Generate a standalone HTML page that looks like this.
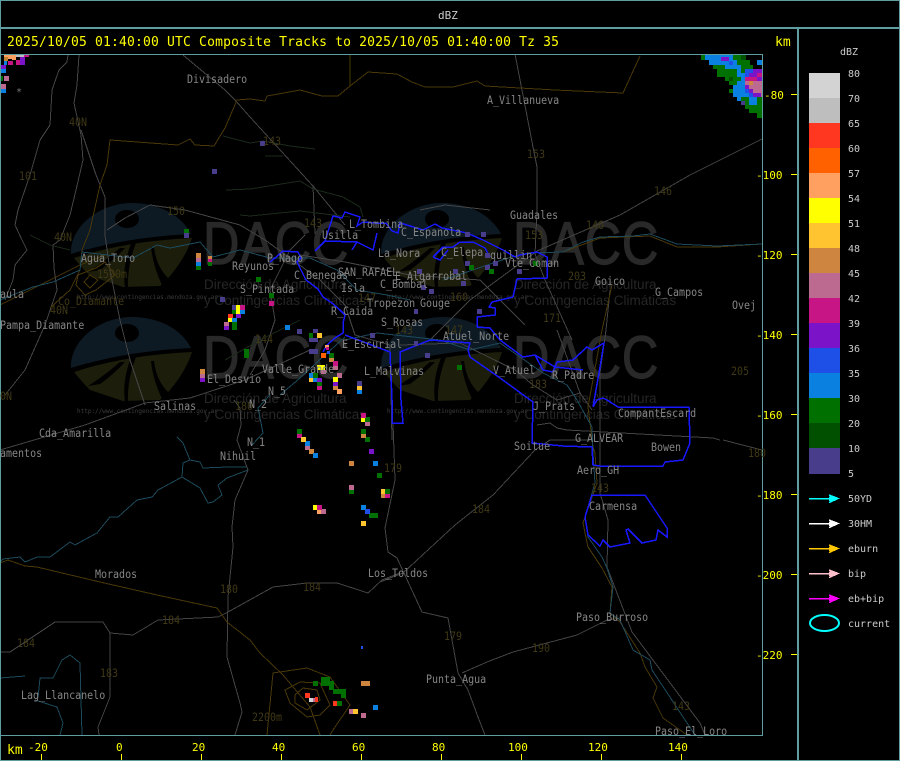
<!DOCTYPE html>
<html><head><meta charset="utf-8"><style>
html,body{margin:0;padding:0;background:#000;width:900px;height:761px;overflow:hidden}
svg{display:block}
text{font-family:"DejaVu Sans Mono","Liberation Mono",monospace;font-size:10px;white-space:pre}
.l{fill:#858585}.n{fill:#3f3815}.y{fill:#ff0;font-size:11px}.t{fill:#ff0;font-size:13px}.g{fill:#ccc}
.d{font-family:"Liberation Sans",sans-serif;font-size:13.5px;fill:#262626}
.u{font-size:6px;fill:#3c3c3c}
.r{fill:none;stroke:#444;stroke-width:1}
.b{fill:none;stroke:#4a3708;stroke-width:1}
.w{fill:none;stroke:#1c4a5c;stroke-width:1}
.e{fill:none;stroke:#1a2a1a;stroke-width:1}
.p{fill:none;stroke:#1818ff;stroke-width:1.5}
</style></head><body>
<svg width="900" height="761" viewBox="0 0 900 761" xmlns="http://www.w3.org/2000/svg">
<defs>
<g id="logo">
<path d="M71 368C70 340 100 317 132 317C160 317 182 330 191 348C150 350 110 356 71 368Z" fill="#0d1a24"/>
<ellipse cx="127" cy="333" rx="12" ry="9" fill="#000"/>
<path d="M74 372C110 360 150 354 192 352C188 365 180 378 170 390L160 400L123 401L90 390Q82 382 74 372Z" fill="#1c1d0b"/>
<path fill="#000" d="M120 362Q104 376 88 386L100 384Q114 374 125 362ZM131 358Q122 380 125 402L128 402Q127 380 136 357ZM151 361Q153 380 162 399L168 392Q156 380 154 361Z"/>
<text transform="matrix(.84 0 0 1 203 378)" style="font-family:'Liberation Sans',sans-serif;font-size:60px;fill:#292929;stroke:#292929;stroke-width:1.2;letter-spacing:1px">DACC</text>
<text class="d" x="204" y="403">Dirección de Agricultura</text>
<text class="d" x="204" y="419">y Contingencias Climáticas</text>
<text class="u" x="77" y="413">http://www.contingencias.mendoza.gov.ar</text>
</g>
<g id="ah"><path d="M0 .5H29M20-3l9 3.5l-9 4M20-1h6M20 2h6" fill="none" stroke-width="1.5" shape-rendering="crispEdges"/></g>
</defs>
<rect width="900" height="761" fill="#000"/>

<use href="#logo" y="-114"/><use href="#logo"/><use href="#logo" x="310" y="-114"/><use href="#logo" x="310"/>

<g shape-rendering="crispEdges">
<!-- roads -->
<path class="r" d="M68 55L67 62L59 70L52 90L51 108L50 125L40 140L30 175L18 210L15 225L22 240L27 250L15 265L13 280L5 300"/>
<path class="r" d="M79 55L77 85L74 103L81 135L83 160L76 190L70 215L60 240L53 245L54 268L57 290L45 325L25 370L5 395"/>
<path class="r" d="M81 130L96 175L105 197L105 235L110 270L120 320L130 360L145 405"/>
<path class="r" d="M183 55L225 90L235 100L250 117L313 186L315 234M313 186L345 225"/>
<path class="r" d="M107 230L125 218L150 205L185 210L240 225L265 240L290 258L320 280L345 305L355 335L390 345L392 440"/>
<path class="r" d="M0 450L85 425L145 403L190 398L245 380L310 350"/>
<path class="r" d="M234 400L240 408L241 425L237 440L248 470L235 500L232 527L233 547L228 597L227 657L240 703L242 712L235 735"/>
<path class="r" d="M305 235L290 250L270 290L275 320L265 350L250 375"/>
<path class="r" d="M525 325L480 280L410 275L345 262L300 255M420 210L445 205L490 210"/>
<path class="r" d="M400 345L460 343L515 370L533 385L557 400L580 393L592 410M557 330L580 393"/>
<path class="r" d="M610 290L606 330L600 373L600 493L608 520L607 567L632 632L700 723L705 735"/>
<path class="r" d="M762 139L690 175L620 215L537 251L470 300L430 340"/>
<path class="r" d="M515 54L533 147L537 167L537 211L535 254L545 280L572 340"/>
<path class="r" d="M537 425L550 423L557 428L567 430L713 438L720 440M723 440L762 450"/>
<path class="r" d="M380 582L403 573L455 525L493 495L535 450L550 440L590 440"/>
<path class="r" d="M393 423L395 480L385 528L388 552L397 558L422 612L448 618L458 673L468 690L478 717L485 735"/>
<path class="r" d="M462 673L487 662L513 652L577 635L607 620L620 618"/>
<path class="r" d="M0 652L10 652L55 622L103 622L110 633L133 635L158 620L218 617L228 612L273 587L307 583L337 583L368 593L382 580L400 573"/>
<path class="r" d="M110 633L110 697L98 727L99 735"/>
<!-- brown -->
<path class="b" d="M350 54L350 86L368 72L397 74L412 82L425 87L453 87L477 81L485 86L520 88L555 90L623 93L640 56"/>
<path class="b" d="M350 86L338 96L322 96L300 90L267 96L265 101L250 99L237 100L225 128L214 146L195 145L190 139L178 145L110 140L107 165L100 185L90 230L82 250L80 270L70 290L50 308"/>
<path class="b" d="M0 305L40 285L80 265L105 255"/>
<path class="b" d="M96 268L78 275L76 285L85 295L96 290L115 275L105 262Z M90 275L84 282L90 288L98 280Z"/>
<path class="b" d="M612 285L602 330L588 407L593 447L595 453L597 483L583 523L588 547L602 568L612 587L610 613L620 622L640 653L645 667L657 687L653 698L663 718L687 735"/>
<path class="b" d="M0 563L8 560L25 566L37 567L100 582L157 595L217 608L227 622L250 640L260 653L283 675L310 707L320 735"/>
<path class="b" d="M267 735L273 673L307 668L330 677L350 705L333 730L330 735"/>
<path class="b" d="M285 690L300 682L320 683L330 705L320 715L307 717L290 703Z M295 695L303 688L317 690L320 700L307 710L295 703Z"/>
<path class="b" d="M563 252L600 238L650 236L677 247L717 247L762 244"/>
<!-- rivers -->
<path class="w" d="M0 300L33 287L53 282L80 270L82 252L133 258L157 245L170 248L200 242L213 257L240 250L270 258L310 258L337 270L357 290L387 295L410 300"/>
<path class="w" d="M345 340L377 333L440 340L470 350L500 343L520 357L543 373L567 385L577 400L592 427L593 453L595 483L585 517L588 537L602 557L607 568L613 587L610 613L620 620L633 650L650 660L652 670L695 735"/>
<path class="w" d="M280 395L300 378L325 355L345 337"/>
<path class="w" d="M443 280L467 272L493 263L508 258L528 253L563 252L583 242L600 237L633 236L650 234L677 244L717 246L762 244"/>
<path class="w" d="M270 395L258 408L263 433L252 445M0 562L3 559L20 557L25 562L37 557L50 557L70 542L75 545L97 533L110 517L118 517L137 500L152 497L158 490L182 477L200 488L208 503L213 502L222 495L218 485L227 478L248 470M182 477L183 463L190 460L183 443L177 437M190 460L200 462L203 468L227 467L247 467"/>
<path class="w" d="M0 678L25 676M38 698L40 678L53 678L62 660L70 655L80 663L82 735M35 700L57 707L63 723L60 735"/>
<!-- green -->
<path class="e" d="M223 136L250 143L263 141L290 146L315 149M265 156L283 156M226 190L250 189L300 181L313 189L343 197L360 207L363 217M240 215L250 216L300 211L350 217M30 235L50 245L70 250M225 360L260 340L300 320"/>
<!-- blue -->
<path class="p" d="M270 262L275 258L283 251L298 252L301 258L297 262L302 272L306 280L318 289L323 297L332 303L340 310L345 315L343 323L343 333L335 338L327 345L323 352"/>
<path class="p" d="M315 251L325 241L333 216L342 218L345 212L360 217L357 226L363 222L375 223L386 223L392 231L398 233L400 223L407 225L423 230L435 224L442 228L467 233L483 240L503 250L515 257L520 255L537 252L547 257L547 278L517 279L513 297L492 302L489 307L495 308L495 315L477 317L477 327L490 328L500 340L523 357L535 355L555 367L583 370"/>
<path class="p" d="M357 242L373 250L377 233M325 241L357 242L352 250"/>
<path class="p" d="M433 257L443 247L453 247L460 242L473 242L485 248L490 257M433 257L440 260L448 250"/>
<path class="p" d="M345 335L390 352L392 400L392 423L403 423L401 400L400 352L430 340L470 343L468 350L470 357L500 378L533 402L532 443L563 446L592 447L593 465L600 466L663 466L665 462L683 460L690 443L689 407L618 407L607 400L603 398L597 400L593 407L599 373L604 343L592 350L587 347L573 360L557 362L553 372L543 370L535 355"/>
<path class="p" d="M592 495L645 495L667 528L667 537L658 530L656 540L642 543L628 529L626 530L630 543L610 547L603 540L600 546L588 535L585 517Z"/>

<!-- radar: top-left -->
<path fill="#ffa060" d="M4 55h12v4H4zM12 55h4v5h-4z"/>
<path fill="#c08030" d="M4 57h4v4H4z"/>
<path fill="#bebebe" d="M16 55h8v2h-8z"/>
<path fill="#c71585" d="M24 55h5v2h-5zM8 61h5v4H8zM16 60h4v5h-4z"/>
<path fill="#7b14c8" d="M20 57h5v8h-5zM1 65h5v4H1z"/>
<path fill="#0a80e0" d="M4 61h3v4H4zM1 69h5v4H1zM1 89h5v4H1z"/>
<path fill="#bc6a8f" d="M4 76h5v5H4zM1 84h5v5H1z"/>
<path fill="#007000" d="M1 76h2v5H1z"/>
<!-- radar: top-right -->
<path fill="#007000" d="M701 55h4v5h-4zM733 55h13v5h-13zM737 60h13v5h-13zM713 65h12v4h-12zM741 65h12v4h-12zM717 69h20v8h-20zM741 69h4v4h-4zM725 77h16v4h-16zM729 81h8v4h-8zM729 89h4v4h-4zM741 97h8v4h-8zM757 97h5v8h-5zM745 101h4v4h-4zM745 105h17v4h-17zM749 109h13v4h-13zM757 113h5v5h-5z"/>
<path fill="#005000" d="M741 55h5v5h-5zM729 77h4v4h-4z"/>
<path fill="#0a80e0" d="M705 55h28v5h-28zM709 60h28v5h-28zM725 65h16v4h-16zM757 60h5v5h-5zM737 69h4v8h-4zM741 73h4v4h-4zM741 77h4v8h-4zM737 81h8v4h-8zM733 85h12v12h-12zM745 93h4v4h-4zM737 97h4v4h-4zM749 97h8v8h-8z"/>
<path fill="#7b14c8" d="M721 57h8v4h-8zM753 69h9v4h-9zM749 73h8v4h-8zM757 77h5v4h-5zM745 85h4v4h-4zM749 89h4v4h-4zM753 93h8v4h-8z"/>
<path fill="#1e50e8" d="M729 61h4v4h-4zM745 69h4v4h-4zM749 69h4v4h-4zM745 73h4v4h-4zM745 89h4v4h-4zM749 93h4v4h-4z"/>
<path fill="#c71585" d="M745 77h12v4h-12zM757 73h5v4h-5z"/>
<path fill="#bc6a8f" d="M745 81h17v4h-17zM749 85h13v4h-13zM753 89h9v4h-9zM761 93h1v4h-1z"/>
<path fill="#cd853f" d="M749 81h4v4h-4z"/>
<path fill="#483d8b" d="M741 101h4v4h-4z"/>
<!-- radar: scatter -->
<path fill="#483d8b" d="M184 233h5v5h-5zM260 141h5v5h-5zM212 169h5v5h-5zM220 297h5v5h-5zM232 305h4v5h-4zM297 329h5v5h-5zM313 329h5v4h-5zM309 338h9v4h-9zM309 349h9v5h-9zM357 381h5v5h-5zM370 333h5v5h-5zM414 309h4v5h-4zM414 341h4v5h-4zM465 232h5v5h-5zM481 232h5v5h-5zM485 253h5v5h-5zM465 261h5v5h-5zM493 261h5v5h-5zM485 265h5v5h-5zM517 269h5v5h-5zM417 269h5v5h-5zM453 269h5v5h-5zM461 281h5v5h-5zM421 285h5v5h-5zM429 289h5v5h-5zM477 309h5v5h-5zM425 353h5v5h-5z"/>
<path fill="#007000" d="M184 229h5v4h-5zM196 266h5v4h-5zM208 262h4v4h-4zM256 277h5v5h-5zM269 293h5v5h-5zM232 310h4v4h-4zM232 322h5v8h-5zM309 333h4v5h-4zM244 349h5v9h-5zM329 353h5v5h-5zM313 373h5v5h-5zM317 382h5v4h-5zM469 265h5v5h-5zM489 269h5v5h-5zM533 261h5v5h-5zM457 365h5v5h-5zM365 417h5v5h-5zM361 429h5v5h-5zM365 437h5v5h-5zM377 473h5v5h-5zM349 490h5v4h-5zM385 489h5v5h-5zM297 429h5v5h-5zM369 513h9v5h-9zM313 681h5v5h-5zM321 677h9v9h-9zM329 681h5v9h-5zM333 689h13v5h-13zM341 694h5v4h-5zM337 701h5v5h-5z"/>
<path fill="#bc6a8f" d="M196 258h5v4h-5zM224 322h5v4h-5zM333 366h5v4h-5zM321 370h5v4h-5zM337 373h5v5h-5zM200 374h5v4h-5zM365 422h5v4h-5zM349 485h5v5h-5zM305 446h5v4h-5zM321 509h5v5h-5zM349 709h4v5h-4zM361 713h5v5h-5zM313 698h5v4h-5z"/>
<path fill="#cd853f" d="M196 253h5v5h-5zM208 256h4v3h-4zM329 358h5v4h-5zM200 369h5v5h-5zM333 386h5v4h-5zM361 434h5v4h-5zM349 461h5v5h-5zM381 494h4v4h-4zM309 449h5v5h-5zM361 681h9v5h-9z"/>
<path fill="#c71585" d="M208 259h4v3h-4zM269 301h5v5h-5zM240 305h5v5h-5zM333 361h5v5h-5zM317 386h5v4h-5zM361 413h5v5h-5zM385 494h5v4h-5zM297 434h5v4h-5zM317 505h5v5h-5z"/>
<path fill="#0a80e0" d="M196 262h5v4h-5zM240 310h5v4h-5zM232 318h5v4h-5zM285 325h5v5h-5zM309 373h4v5h-4zM313 378h5v4h-5zM357 390h5v4h-5zM373 461h5v5h-5zM305 441h5v5h-5zM313 453h5v5h-5zM361 505h5v5h-5zM373 705h5v5h-5z"/>
<path fill="#ff0" d="M236 305h4v9h-4zM228 318h4v4h-4zM317 365h8v5h-8zM333 377h5v5h-5zM361 418h4v4h-4zM313 505h4v5h-4z"/>
<path fill="#7b14c8" d="M236 314h5v4h-5zM224 326h5v4h-5zM200 378h5v4h-5zM317 378h5v4h-5zM333 382h5v4h-5zM369 449h5v5h-5z"/>
<path fill="#ff3620" d="M228 314h5v4h-5zM305 693h5v5h-5zM315 697h3v5h-3zM333 701h4v5h-4z"/>
<path fill="#ffc430" d="M317 333h5v5h-5zM309 378h4v4h-4zM357 386h5v4h-5zM381 489h4v5h-4zM301 437h5v5h-5zM361 521h5v5h-5zM353 709h5v5h-5z"/>
<path fill="#ff6000" d="M321 353h5v5h-5z"/>
<path fill="#ffa060" d="M337 389h5v5h-5zM317 510h4v4h-4zM325 345h4v3h-4z"/>
<path fill="#1e50e8" d="M365 509h5v5h-5zM327 351h3v3h-3zM361 646h2v3h-2z"/>
<path fill="#c71585" d="M326 347h3v3h-3z"/>
<path fill="#d3d3d3" d="M309 698h4v4h-4z"/>

<!-- frame -->
<path fill="#5f9ea0" d="M0 0h900v1H0zM0 27h900v2H0zM0 54h763v1H0zM0 760h900v1H0zM0 0h1v761H0zM797 28h2v733h-2zM899 0h1v761h-1zM0 735h763v1H0zM762 54h1v682h-1z"/>
<!-- ticks -->
<path fill="#ff0" d="M791 94h6v1h-6zM791 174h6v1h-6zM791 254h6v1h-6zM791 334h6v1h-6zM791 414h6v1h-6zM791 494h6v1h-6zM791 574h6v1h-6zM791 654h6v1h-6zM41 754h1v6h-1zM121 754h1v6h-1zM201 754h1v6h-1zM281 754h1v6h-1zM361 754h1v6h-1zM441 754h1v6h-1zM521 754h1v6h-1zM601 754h1v6h-1zM681 754h1v6h-1z"/>
<!-- legend -->
<rect x="809" y="73" width="31" height="25" fill="#d3d3d3"/><rect x="809" y="98" width="31" height="25" fill="#bebebe"/><rect x="809" y="123" width="31" height="25" fill="#ff3620"/><rect x="809" y="148" width="31" height="25" fill="#ff6000"/><rect x="809" y="173" width="31" height="25" fill="#ffa060"/><rect x="809" y="198" width="31" height="25" fill="#ff0"/><rect x="809" y="223" width="31" height="25" fill="#ffc430"/><rect x="809" y="248" width="31" height="25" fill="#cd853f"/><rect x="809" y="273" width="31" height="25" fill="#bc6a8f"/><rect x="809" y="298" width="31" height="25" fill="#c71585"/><rect x="809" y="323" width="31" height="25" fill="#7b14c8"/><rect x="809" y="348" width="31" height="25" fill="#1e50e8"/><rect x="809" y="373" width="31" height="25" fill="#0a80e0"/><rect x="809" y="398" width="31" height="25" fill="#007000"/><rect x="809" y="423" width="31" height="25" fill="#005000"/><rect x="809" y="448" width="31" height="26" fill="#483d8b"/>
</g>
<use href="#ah" x="809" y="498" stroke="#0ff"/><use href="#ah" x="809" y="523" stroke="#fff"/><use href="#ah" x="809" y="548" stroke="#ffc800"/><use href="#ah" x="809" y="573" stroke="#ffc0cb"/><use href="#ah" x="809" y="598" stroke="#f0f"/>
<ellipse cx="824.5" cy="623" rx="14.5" ry="8" fill="none" stroke="#0ff" stroke-width="2"/>

<!-- legend text -->
<g class="g">
<text x="438" y="19" style="font-size:11px">dBZ</text>
<text x="840" y="55">dBZ</text>
<text x="848" y="77">80</text><text x="848" y="102">70</text><text x="848" y="127">65</text><text x="848" y="152">60</text><text x="848" y="177">57</text><text x="848" y="202">54</text><text x="848" y="227">51</text><text x="848" y="252">48</text><text x="848" y="277">45</text><text x="848" y="302">42</text><text x="848" y="327">39</text><text x="848" y="352">36</text><text x="848" y="377">35</text><text x="848" y="402">30</text><text x="848" y="427">20</text><text x="848" y="452">10</text><text x="848" y="477">5</text>
<text x="848" y="502">50YD</text><text x="848" y="527">30HM</text><text x="848" y="552">eburn</text><text x="848" y="577">bip</text><text x="848" y="602">eb+bip</text><text x="848" y="627">current</text>
</g>

<!-- title & axes -->
<text class="t" x="7" y="46" textLength="552">2025/10/05 01:40:00 UTC Composite Tracks to 2025/10/05 01:40:00 Tz 35</text>
<text class="t" x="775" y="46">km</text>
<text class="t" x="7" y="754">km</text>
<text class="y" x="764" y="99">-80</text><text class="y" x="756" y="179">-100</text><text class="y" x="756" y="259">-120</text><text class="y" x="756" y="339">-140</text><text class="y" x="756" y="419">-160</text><text class="y" x="756" y="499">-180</text><text class="y" x="756" y="579">-200</text><text class="y" x="756" y="659">-220</text>
<text class="y" x="28" y="751">-20</text><text class="y" x="116" y="751">0</text><text class="y" x="192" y="751">20</text><text class="y" x="272" y="751">40</text><text class="y" x="352" y="751">60</text><text class="y" x="432" y="751">80</text><text class="y" x="508" y="751">100</text><text class="y" x="588" y="751">120</text><text class="y" x="668" y="751">140</text>

<!-- brown labels -->
<g class="n">
<text transform="matrix(1 0 0 1.15 69 126)">40N</text><text transform="matrix(1 0 0 1.15 19 180)">101</text><text transform="matrix(1 0 0 1.15 263 145)">143</text><text transform="matrix(1 0 0 1.15 527 158)">153</text><text transform="matrix(1 0 0 1.15 654 195)">146</text><text transform="matrix(1 0 0 1.15 167 215)">150</text><text transform="matrix(1 0 0 1.15 586 229)">146</text><text transform="matrix(1 0 0 1.15 525 239)">153</text><text transform="matrix(1 0 0 1.15 304 227)">143</text><text transform="matrix(1 0 0 1.15 54 241)">40N</text><text transform="matrix(1 0 0 1.15 97 278)">1500m</text><text transform="matrix(1 0 0 1.15 568 280)">203</text><text transform="matrix(1 0 0 1.15 50 314)">40N</text><text transform="matrix(1 0 0 1.15 358 302)">147</text><text transform="matrix(1 0 0 1.15 450 301)">160</text><text transform="matrix(1 0 0 1.15 543 322)">171</text><text transform="matrix(1 0 0 1.15 255 343)">144</text><text transform="matrix(1 0 0 1.15 395 334)">143</text><text transform="matrix(1 0 0 1.15 445 334)">147</text><text transform="matrix(1 0 0 1.15 731 375)">205</text><text transform="matrix(1 0 0 1.15 529 388)">183</text><text transform="matrix(1 0 0 1.15 235 410)">180</text><text transform="matrix(1 0 0 1.15 0 400)">0N</text><text transform="matrix(1 0 0 1.15 748 457)">180</text><text transform="matrix(1 0 0 1.15 384 472)">179</text><text transform="matrix(1 0 0 1.15 591 492)">143</text><text transform="matrix(1 0 0 1.15 472 513)">184</text><text transform="matrix(1 0 0 1.15 303 591)">184</text><text transform="matrix(1 0 0 1.15 220 593)">180</text><text transform="matrix(1 0 0 1.15 162 624)">184</text><text transform="matrix(1 0 0 1.15 444 640)">179</text><text transform="matrix(1 0 0 1.15 17 647)">184</text><text transform="matrix(1 0 0 1.15 532 652)">190</text><text transform="matrix(1 0 0 1.15 100 677)">183</text><text transform="matrix(1 0 0 1.15 252 721)">2200m</text><text transform="matrix(1 0 0 1.15 672 710)">143</text><text transform="matrix(1 0 0 1.15 58 305)">Co_Diamante</text>
</g>
<!-- place labels -->
<g class="l">
<text x="16" y="95" style="fill:#777">*</text>
<text transform="matrix(1 0 0 1.15 187 83)">Divisadero</text><text transform="matrix(1 0 0 1.15 487 104)">A_Villanueva</text><text transform="matrix(1 0 0 1.15 510 219)">Guadales</text><text transform="matrix(1 0 0 1.15 349 228)">L_Tombina</text><text transform="matrix(1 0 0 1.15 322 239)">Usilla</text><text transform="matrix(1 0 0 1.15 401 236)">C_Espanola</text><text transform="matrix(1 0 0 1.15 378 257)">La_Nora</text><text transform="matrix(1 0 0 1.15 441 256)">C_Elepa</text><text transform="matrix(1 0 0 1.15 490 259)">quillin</text><text transform="matrix(1 0 0 1.15 505 267)">Vte_Coman</text><text transform="matrix(1 0 0 1.15 81 262)">Agua_Toro</text><text transform="matrix(1 0 0 1.15 267 262)">P_Nago</text><text transform="matrix(1 0 0 1.15 232 270)">Reyunos</text><text transform="matrix(1 0 0 1.15 294 279)">C_Benegas</text><text transform="matrix(1 0 0 1.15 338 276)">SAN_RAFAEL</text><text transform="matrix(1 0 0 1.15 395 280)">E_Algarrobal</text><text transform="matrix(1 0 0 1.15 380 288)">C_Bombal</text><text transform="matrix(1 0 0 1.15 595 285)">Goico</text><text transform="matrix(1 0 0 1.15 655 296)">G_Campos</text><text transform="matrix(1 0 0 1.15 240 293)">S_Pintada</text><text transform="matrix(1 0 0 1.15 0 298)">aula</text><text transform="matrix(1 0 0 1.15 341 292)">Isla</text><text transform="matrix(1 0 0 1.15 331 315)">R_Caida</text><text transform="matrix(1 0 0 1.15 367 307)">Tropezon</text><text transform="matrix(1 0 0 1.15 420 307)">Gouge</text><text transform="matrix(1 0 0 1.15 732 309)">Ovej</text><text transform="matrix(1 0 0 1.15 381 326)">S_Rosas</text><text transform="matrix(1 0 0 1.15 0 329)">Pampa_Diamante</text><text transform="matrix(1 0 0 1.15 342 348)">E_Escurial</text><text transform="matrix(1 0 0 1.15 443 340)">Atuel_Norte</text><text transform="matrix(1 0 0 1.15 493 374)">V_Atuel</text><text transform="matrix(1 0 0 1.15 552 379)">R_Padre</text><text transform="matrix(1 0 0 1.15 364 375)">L_Malvinas</text><text transform="matrix(1 0 0 1.15 262 373)">Valle_Grande</text><text transform="matrix(1 0 0 1.15 207 383)">El_Desvio</text><text transform="matrix(1 0 0 1.15 268 395)">N_5</text><text transform="matrix(1 0 0 1.15 154 410)">Salinas</text><text transform="matrix(1 0 0 1.15 249 408)">N_2</text><text transform="matrix(1 0 0 1.15 533 410)">J_Prats</text><text transform="matrix(1 0 0 1.15 618 417)">CompantEscard</text><text transform="matrix(1 0 0 1.15 39 437)">Cda_Amarilla</text><text transform="matrix(1 0 0 1.15 575 442)">G_ALVEAR</text><text transform="matrix(1 0 0 1.15 247 446)">N_1</text><text transform="matrix(1 0 0 1.15 651 451)">Bowen</text><text transform="matrix(1 0 0 1.15 514 450)">Soitue</text><text transform="matrix(1 0 0 1.15 220 460)">Nihuil</text><text transform="matrix(1 0 0 1.15 0 457)">amentos</text><text transform="matrix(1 0 0 1.15 577 474)">Aero_GH</text><text transform="matrix(1 0 0 1.15 589 510)">Carmensa</text><text transform="matrix(1 0 0 1.15 368 577)">Los_Toldos</text><text transform="matrix(1 0 0 1.15 95 578)">Morados</text><text transform="matrix(1 0 0 1.15 576 621)">Paso_Burroso</text><text transform="matrix(1 0 0 1.15 426 683)">Punta_Agua</text><text transform="matrix(1 0 0 1.15 21 699)">Lag_Llancanelo</text><text transform="matrix(1 0 0 1.15 655 735)">Paso_El_Loro</text>
</g>
</svg>
</body></html>
